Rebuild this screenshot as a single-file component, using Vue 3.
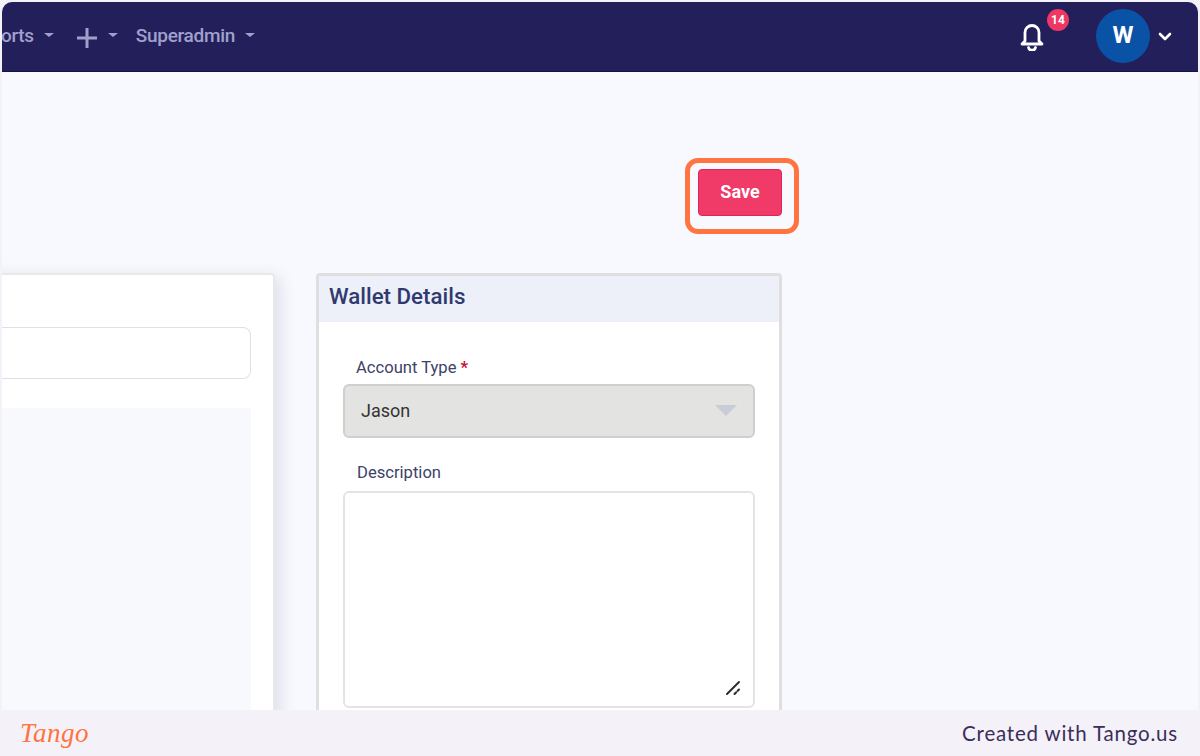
<template>
  <div class="shot">
    <div class="frame">
      <header class="topbar">
        <nav class="topbar__menu">
          <span class="menu-item">Reports<i class="caret" /></span>
          <span class="menu-item menu-item--add">
            <svg class="plus" width="22" height="22" viewBox="0 0 22 22"><path d="M11 1v20M1 11h20" /></svg>
            <i class="caret" />
          </span>
          <span class="menu-item">Superadmin<i class="caret" /></span>
        </nav>

        <div class="topbar__right">
          <div class="bell">
            <svg width="26" height="30" viewBox="0 0 26 30" fill="none" stroke="#fff" stroke-width="2.8" stroke-linejoin="round" stroke-linecap="round">
              <path d="M6 20V11.5a7 7 0 0 1 14 0V20l3 3H3z" />
              <path d="M9.5 26.5a3.6 3.6 0 0 0 7 0" />
            </svg>
            <span class="bell__badge">14</span>
          </div>
          <div class="avatar">W</div>
          <svg class="chevron" width="14" height="9" viewBox="0 0 14 9" fill="none" stroke="#fff" stroke-width="2.6" stroke-linecap="round" stroke-linejoin="round">
            <path d="M2 2l5 5 5-5" />
          </svg>
        </div>
      </header>

      <main class="content">
        <div class="actions">
          <button class="btn-save" type="button">
            Save
            <span class="highlight" />
          </button>
        </div>

        <div class="columns">
          <section class="card card--left">
            <div class="fake-input" />
            <div class="fake-block" />
          </section>

          <section class="card card--wallet">
            <h2 class="card__head">Wallet Details</h2>
            <div class="card__body">
              <label class="field-label">Account Type <b>*</b></label>
              <div class="select">
                <span>{{ accountType }}</span>
                <i class="select__arrow" />
              </div>
              <label class="field-label field-label--desc">Description</label>
              <div class="textarea">
                <svg class="textarea__grip" width="16" height="16" viewBox="0 0 16 16" fill="none" stroke="#2b2b2b" stroke-width="2" stroke-linecap="round">
                  <path d="M2 14L14 2" />
                  <path d="M9.5 14L14 9.5" stroke-dasharray="2.5 2" />
                </svg>
              </div>
            </div>
          </section>
        </div>
      </main>
    </div>

    <footer class="tango">
      <span class="tango__logo">Tango</span>
      <span class="tango__credit">Created with Tango.us</span>
    </footer>
  </div>
</template>

<script setup>
const accountType = 'Jason'
</script>

<style>
html, body {
  margin: 0;
  background: #fff;
}
</style>

<style scoped>
.shot {
  width: 1200px;
  height: 756px;
  display: flex;
  flex-direction: column;
  overflow: hidden;
  background: #f4f2f8;
  font-family: Roboto, "Liberation Sans", sans-serif;
}

.frame {
  height: 708px;
  margin: 2px 2px 0;
  background: #f8f9fe;
  border-radius: 10px 10px 0 0;
  overflow: hidden;
}

/* top nav */
.topbar {
  height: 68px;
  padding-bottom: 1px;
  background: #231f5b;
  border-bottom: 1px solid #15134c;
  display: flex;
  align-items: center;
  justify-content: space-between;
  overflow: hidden;
}

.topbar__menu {
  display: flex;
  align-items: center;
  margin-left: -33px;
  padding-bottom: 2px;
}

.menu-item {
  display: flex;
  align-items: center;
  color: #9fa1cc;
  font-size: 19px;
  font-weight: 500;
  letter-spacing: -0.3px;
  white-space: nowrap;
}

.menu-item--add {
  margin: 0 18px 0 22px;
}

.plus {
  margin-top: 6px;
}

.plus path {
  stroke: #9fa1cc;
  stroke-width: 3;
}

.caret {
  width: 0;
  height: 0;
  margin-left: 10px;
  border-left: 5px solid transparent;
  border-right: 5px solid transparent;
  border-top: 4px solid #9fa1cc;
}

.topbar__right {
  display: flex;
  align-items: center;
  margin-right: 26px;
}

.bell {
  position: relative;
  display: flex;
  margin-right: 51px;
}

.bell__badge {
  position: absolute;
  top: -12px;
  left: 28px;
  width: 22px;
  height: 22px;
  border-radius: 50%;
  background: #ee3763;
  color: #fff;
  font-size: 12px;
  font-weight: 700;
  line-height: 22px;
  text-align: center;
}

.avatar {
  width: 54px;
  height: 54px;
  border-radius: 50%;
  background: #0a52a5;
  color: #fff;
  font-size: 24px;
  font-weight: 700;
  line-height: 52px;
  text-align: center;
}

.chevron {
  margin-left: 8px;
}

/* page */
.content {
  width: 810px;
  margin-left: -30px;
}

.actions {
  display: flex;
  justify-content: flex-end;
  padding: 97px 0 57px;
}

.btn-save {
  position: relative;
  width: 84px;
  height: 47px;
  border: 1px solid #e0245a;
  border-radius: 4px;
  background: #f03a67;
  color: #fff;
  font-family: inherit;
  font-size: 18px;
  font-weight: 700;
  padding: 0 0 2px;
}

.highlight {
  position: absolute;
  top: -12px;
  left: -14px;
  right: -18px;
  bottom: -19px;
  border: 5px solid #ff7441;
  border-radius: 13px;
}

.columns {
  display: flex;
  gap: 41px;
  align-items: flex-start;
}

.card {
  box-sizing: border-box;
  height: 520px;
  background: #fff;
  border-radius: 4px;
}

.card--left {
  flex: 1;
  border: 2px solid #e9e9ec;
  padding: 52px 22px 0 0;
  box-shadow: 5px 4px 16px rgba(60, 64, 90, 0.14);
}

.fake-input {
  height: 50px;
  border: 1px solid #dfe1e6;
  border-radius: 0 8px 8px 0;
  border-left: 0;
}

.fake-block {
  height: 400px;
  margin-top: 29px;
  background: #f7f9fd;
}

.card--wallet {
  width: 466px;
  border: 3px solid #dfdfdf;
  border-bottom: 0;
}

.card__head {
  height: 46px;
  margin: 0;
  padding-left: 10px;
  background: #edf0f8;
  color: #2f3a70;
  font-size: 22.3px;
  font-weight: 500;
  line-height: 41px;
}

.card__body {
  padding: 0 24px;
}

.field-label {
  display: block;
  margin: 35px 0 5px 13px;
  color: #3d4266;
  font-size: 16.6px;
  line-height: 22px;
}

.field-label b {
  color: #c8102e;
}

.field-label--desc {
  margin: 24px 0 7px 14px;
}

.select {
  position: relative;
  box-sizing: border-box;
  height: 54px;
  padding-left: 16px;
  background: #e3e3e1;
  border: 2px solid #cfcfcf;
  border-radius: 6px;
  color: #333;
  font-size: 18px;
  line-height: 50px;
}

.select__arrow {
  position: absolute;
  top: 19px;
  right: 16px;
  width: 0;
  height: 0;
  border-left: 11px solid transparent;
  border-right: 11px solid transparent;
  border-top: 11px solid #c8ccd6;
}

.textarea {
  position: relative;
  box-sizing: border-box;
  height: 217px;
  background: #fff;
  border: 2px solid #e4e4e4;
  border-radius: 6px;
}

.textarea__grip {
  position: absolute;
  right: 12px;
  bottom: 10px;
}

/* tango strip */
.tango {
  flex: 1;
  display: flex;
  align-items: center;
  justify-content: space-between;
  padding: 0 22px 0 20px;
  background: #f4f2f8;
}

.tango__logo {
  color: #ff7441;
  font-family: "Liberation Serif", serif;
  font-size: 27px;
  font-style: italic;
  letter-spacing: 0.5px;
}

.tango__credit {
  color: #3b2e5a;
  font-family: Lato, sans-serif;
  font-size: 20.5px;
  letter-spacing: 0.8px;
}
</style>
